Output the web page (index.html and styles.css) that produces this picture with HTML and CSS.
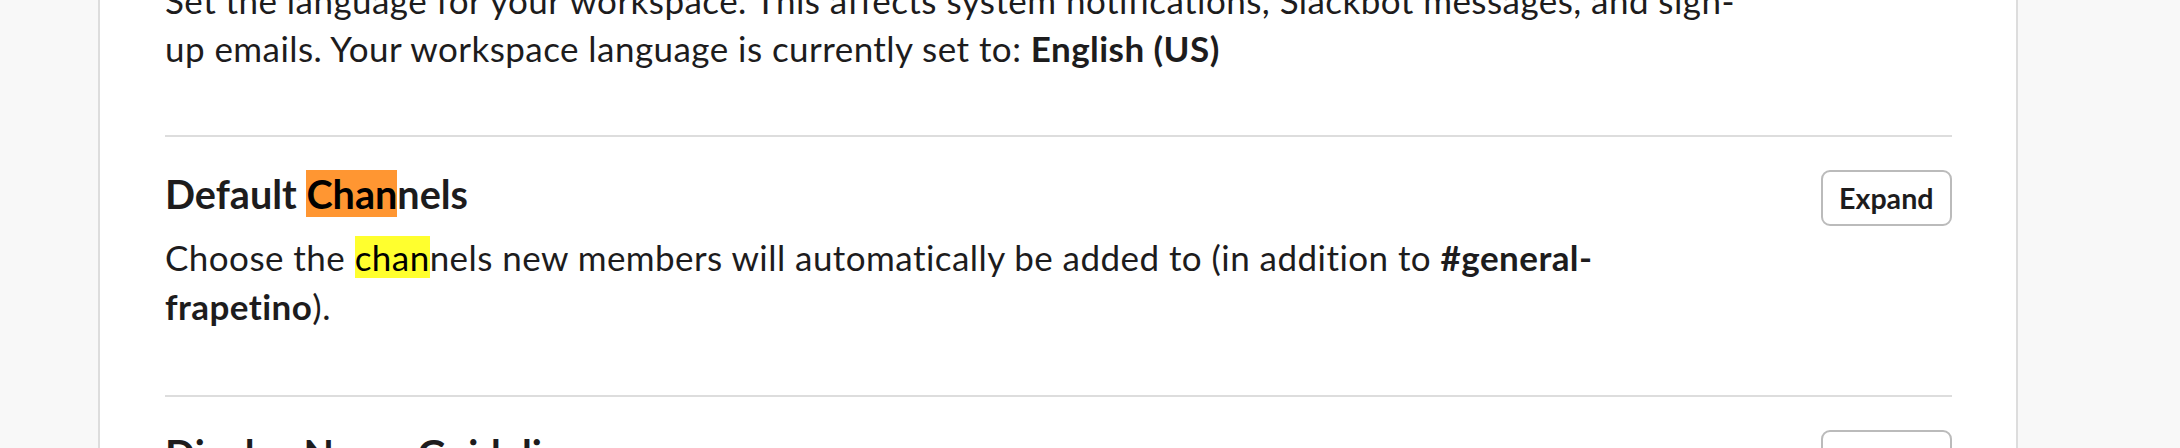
FILE: index.html
```html
<!DOCTYPE html>
<html lang="en">
<head>
<meta charset="utf-8">
<title>Workspace settings</title>
<link rel="stylesheet" href="styles.css">
</head>
<body>
<div class="page">
  <div class="card">
    <section class="setting setting-first">
      <div class="setting-main">
        <p class="desc">Set the language for your workspace. This affects system notifications, Slackbot messages, and sign-up emails. Your workspace language is currently set to: <strong>English (US)</strong></p>
      </div>
    </section>
    <section class="setting">
      <div class="setting-main">
        <h2 class="title">Default <mark class="hl hl-active">Chan</mark>nels</h2>
        <p class="desc">Choose the <mark class="hl">chan</mark>nels new members will automatically be added to (in addition to <strong>#general-frapetino</strong>).</p>
      </div>
      <button class="btn" type="button">Expand</button>
    </section>
    <section class="setting">
      <div class="setting-main">
        <h2 class="title">Display Name Guidelines</h2>
        <p class="desc">Provide guidelines for how members should format their display names.</p>
      </div>
      <button class="btn" type="button">Expand</button>
    </section>
  </div>
</div>
</body>
</html>
```

FILE: styles.css
```css
html, body {
  margin: 0;
  padding: 0;
}

body {
  background: #f8f8f8;
  font-family: Lato, "Open Sans", "Liberation Sans", sans-serif;
  color: #1d1c1d;
  -webkit-font-smoothing: antialiased;
}

.page {
  height: 448px;
  overflow: hidden;
  padding-left: 98px;
}

.card {
  box-sizing: border-box;
  width: 1920px;
  margin-top: -24px;
  padding: 0 64px 0 65px;
  background: #ffffff;
  border-left: 2px solid #dddddd;
  border-right: 2px solid #dddddd;
  min-height: 600px;
}

.setting {
  display: flex;
  align-items: flex-start;
  justify-content: space-between;
  gap: 40px;
  padding: 31px 0 65.5px;
  border-top: 2px solid #dddddd;
}

.setting-first {
  border-top: none;
  padding-top: 0;
  padding-bottom: 62.5px;
}

.setting-main {
  flex: 1 1 auto;
  min-width: 0;
}

.title {
  margin: 0;
  font-size: 39.6px;
  line-height: 52.8px;
  font-weight: 700;
  color: #1d1c1d;
}

.desc {
  margin: 12px 0 0;
  max-width: 1580px;
  font-size: 35px;
  letter-spacing: 0.45px;
  line-height: 48.4px;
  font-weight: 400;
  color: #1d1c1d;
}

.setting-first .desc {
  margin-top: 0;
}

.desc strong {
  font-weight: 700;
}

.hl {
  background: #ffff2e;
  color: #000000;
}

.hl-active {
  background: #ff9632;
}

.btn {
  flex: 0 0 auto;
  box-sizing: border-box;
  height: 56px;
  margin-top: 2px;
  padding: 0 16.5px;
  background: #ffffff;
  border: 2px solid #bbbbbb;
  border-radius: 9px;
  font-family: Lato, "Open Sans", "Liberation Sans", sans-serif;
  font-size: 28.6px;
  font-weight: 700;
  color: #1d1c1d;
  cursor: pointer;
}
```
